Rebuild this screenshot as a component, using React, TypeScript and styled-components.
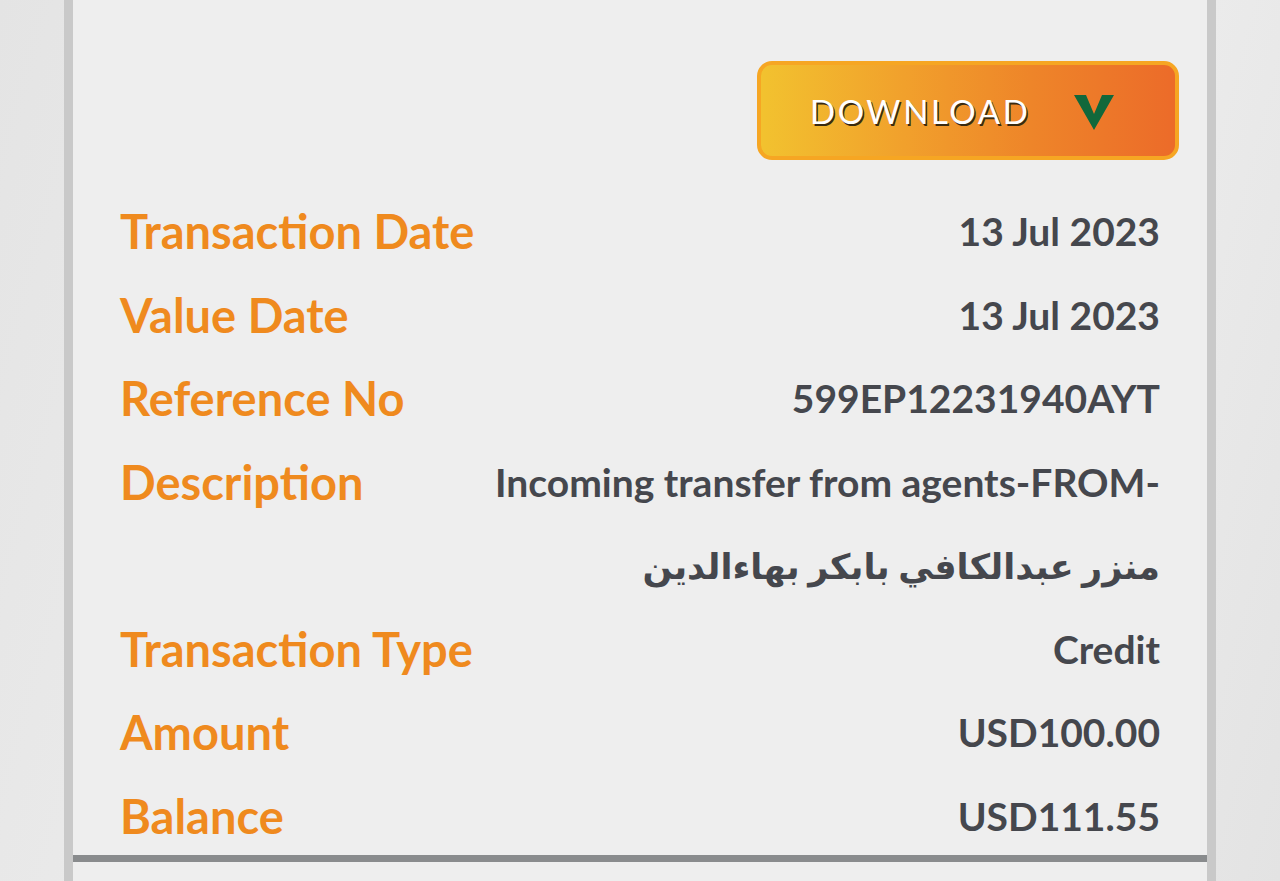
import React from 'react'
import styled, { createGlobalStyle } from 'styled-components'

const rows = [
    { label: 'Transaction Date', value: ['13 Jul 2023'] },
    { label: 'Value Date', value: ['13 Jul 2023'] },
    { label: 'Reference No', value: ['599EP12231940AYT'] },
    { label: 'Description', value: ['Incoming transfer from agents-FROM-', 'منزر عبدالكافي بابكر بهاءالدين'] },
    { label: 'Transaction Type', value: ['Credit'] },
    { label: 'Amount', value: ['USD100.00'] },
    { label: 'Balance', value: ['USD111.55'] },
]

const isArabic = (text: string) => /[\u0600-\u06FF]/.test(text)

const App = () => {
    return (
        <Page>
            <GlobalStyle />
            <Panel>
                <Toolbar>
                    <DownloadButton type="button">
                        <ButtonLabel>DOWNLOAD</ButtonLabel>
                        <svg width="40" height="35" viewBox="0 0 40 35">
                            <polygon points="0,0 12,0 20,19 28,0 40,0 20,35" fill="#11683b" />
                        </svg>
                    </DownloadButton>
                </Toolbar>

                <Details>
                {
                    rows.map(( row ) => (
                        <Row key={row.label}>
                            <Label>{row.label}</Label>
                            <Value>
                                {row.value.map(( line ) => (
                                    <ValueLine key={line} $arabic={isArabic(line)}>{line}</ValueLine>
                                ))}
                            </Value>
                        </Row>
                ))}
                </Details>

                <Separator />
            </Panel>
        </Page>
    )
}

const GlobalStyle = createGlobalStyle`
    html, body {
        margin: 0;
        padding: 0;
        height: 100%;
        overflow: hidden;
    }
    body {
        font-family: "Lato", "DejaVu Sans", sans-serif;
    }
`

const Page = styled.div`
    height: 881px;
    display: flex;
    justify-content: center;
    background: linear-gradient(105deg, #e4e4e4 0%, #ececec 30%, #e6e6e6 55%, #ebebeb 80%, #e3e3e3 100%);
`

const Panel = styled.div`
    width: 1134px;
    height: 100%;
    background: #eeeeee;
    border-left: 9px solid #c9c9c9;
    border-right: 9px solid #c9c9c9;
    display: flex;
    flex-direction: column;
`

const Toolbar = styled.div`
    display: flex;
    justify-content: flex-end;
    padding: 61px 28px 0 0;
`

const DownloadButton = styled.button`
    width: 422px;
    height: 99px;
    box-sizing: border-box;
    border: 4px solid #f6a623;
    border-radius: 15px;
    background: linear-gradient(90deg, #f2c22f 0%, #f1a02c 35%, #ee8529 65%, #ec6b29 100%);
    display: flex;
    align-items: center;
    gap: 44px;
    padding: 0 0 0 49px;
    cursor: pointer;

    svg {
        margin-top: 3px;
    }
`

const ButtonLabel = styled.span`
    font-family: "Lato", sans-serif;
    font-size: 33px;
    font-weight: 400;
    letter-spacing: 2.6px;
    color: #ffffff;
    text-shadow: 1.5px 1.5px 0 #3a2a10;
`

const Details = styled.div`
    display: flex;
    flex-direction: column;
    padding: 30px 47px 0 47px;
`

const Row = styled.div`
    display: flex;
    justify-content: space-between;
    align-items: flex-start;
    gap: 40px;
`

const Label = styled.div`
    line-height: 83.5px;
    font-size: 47px;
    font-weight: 700;
    color: #ef8a1e;
    white-space: nowrap;
`

const Value = styled.div`
    display: flex;
    flex-direction: column;
    align-items: flex-end;
`

const ValueLine = styled.div<{ $arabic?: boolean }>`
    line-height: 83.5px;
    font-size: ${({ $arabic }) => ($arabic ? '35px' : '39px')};
    font-weight: 700;
    color: #45474d;
    white-space: nowrap;
`

const Separator = styled.div`
    height: 7px;
    margin-top: -3px;
    background: #898b8d;
`

export default App
